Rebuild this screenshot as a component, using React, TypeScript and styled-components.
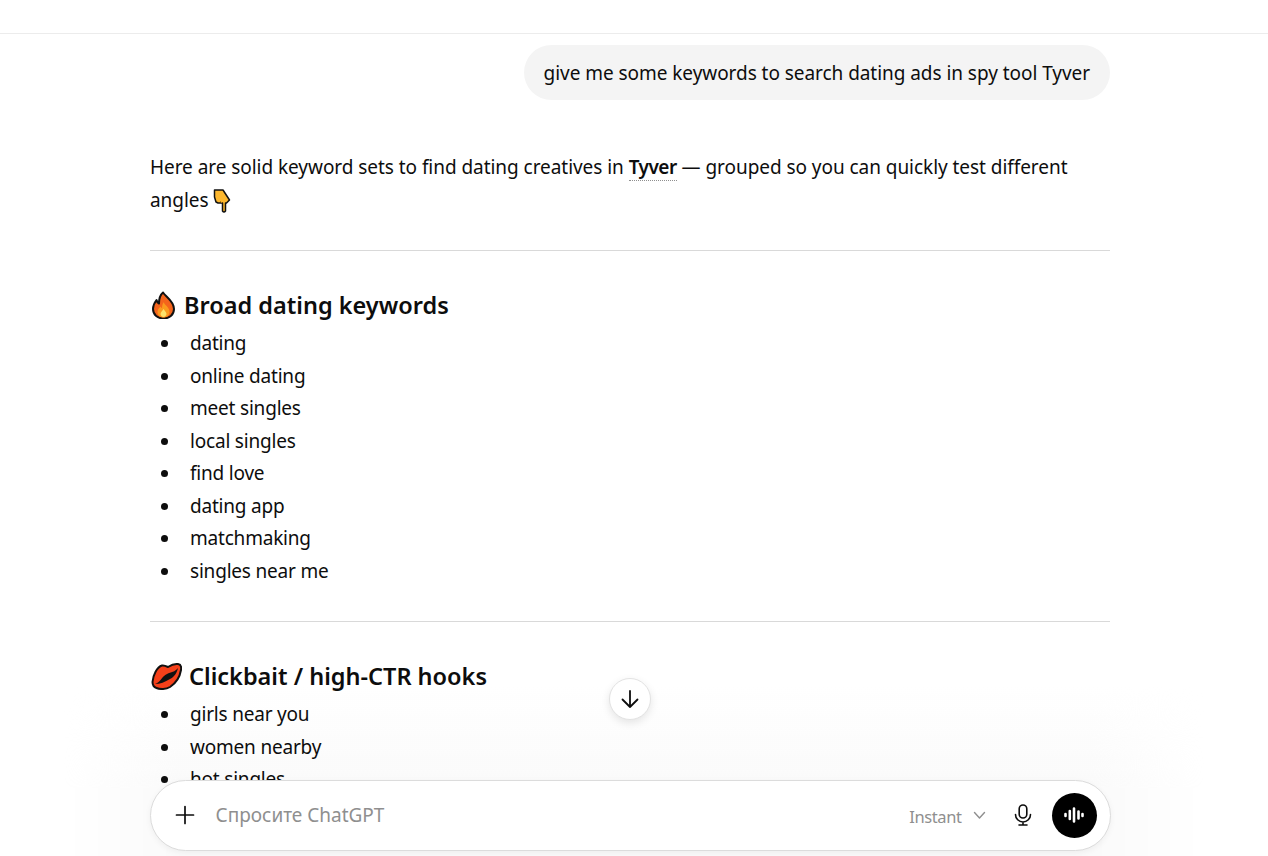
import React from "react";
import styled, { createGlobalStyle } from "styled-components";

const Global = createGlobalStyle`
  html, body { margin: 0; padding: 0; background: #fff; height: 100%; overflow: hidden; }
  #root { height: 100%; }
  * { box-sizing: border-box; }
`;

const Page = styled.div`
  position: relative;
  height: 856px;
  overflow: hidden;
  font-family: "Noto Sans", "Open Sans", sans-serif;
  color: #0d0d0d;
  background: #fff;
`;
const TopBar = styled.header`
  height: 34px;
  border-bottom: 1px solid #ececec;
`;
const Thread = styled.main`
  position: relative;
  width: 960px;
  margin: 0 0 0 150px;
  font-size: 19px;
  letter-spacing: -0.05px;
`;
const UserRow = styled.div`
  display: flex;
  justify-content: flex-end;
  padding-top: 11px;
`;
const Bubble = styled.div`
  height: 55px;
  padding: 0 20px;
  display: flex;
  align-items: center;
  background: #f4f4f4;
  border-radius: 28px;
`;
const Para = styled.p`
  margin: 51px 0 0;
  line-height: 33px;
`;
const Term = styled.strong`
  font-weight: 600;
  letter-spacing: -0.5px;
  border-bottom: 1px dotted #8f8f8f;
`;
const Rule = styled.hr<{ $top: number }>`
  margin: ${(p) => p.$top}px 0 0;
  border: 0;
  border-top: 1px solid #d9d9d9;
`;
const Heading = styled.h3`
  margin: 36px 0 0;
  height: 35px;
  display: flex;
  align-items: center;
  gap: 7px;
  font-size: 23.5px;
  font-weight: 600;
  letter-spacing: 0;
`;
const List = styled.ul`
  margin: 5px 0 0;
  padding: 0 0 0 40px;
  list-style: none;
  letter-spacing: -0.2px;
`;
const Item = styled.li`
  position: relative;
  height: 32.5px;
  line-height: 32.5px;
  &::before {
    content: "";
    position: absolute;
    left: -29px;
    top: 13px;
    width: 7px;
    height: 7px;
    border-radius: 50%;
    background: #0d0d0d;
  }
`;
const Emoji = styled.svg`
  flex: none;
  vertical-align: -6px;
`;
const Fade = styled.div`
  position: absolute;
  left: 0;
  right: 0;
  bottom: 0;
  height: 170px;
  background: linear-gradient(to bottom, rgba(250,250,250,0), #fafafa 60%, #fafafa 100%);
  mask-image: linear-gradient(to right, transparent 5%, #000 14%, #000 86%, transparent 95%);
`;
const Composer = styled.div`
  position: absolute;
  left: 149.5px;
  top: 779.5px;
  width: 961px;
  height: 71px;
  display: flex;
  align-items: center;
  background: #fff;
  border-radius: 36px;
  border: 1px solid #dcdcdc;
  box-shadow: 0 2px 6px rgba(0,0,0,0.05);
  padding: 0 13px 0 23px;
`;
const PlusIcon = styled.svg`
  flex: none;
`;
const Placeholder = styled.div`
  flex: 1;
  margin-left: 20px;
  font-size: 19px;
  color: #8f8f8f;
`;
const ModelPicker = styled.div`
  display: flex;
  align-items: center;
  gap: 11px;
  color: #8f8f8f;
  font-size: 16.5px;
  letter-spacing: -0.4px;
  margin-right: 28px;
`;
const ModelLabel = styled.span`
  margin-top: 2px;
`;
const VoiceButton = styled.div`
  margin-left: 20px;
  width: 45px;
  height: 45px;
  border-radius: 50%;
  background: #000;
  display: flex;
  align-items: center;
  justify-content: center;
`;
const ScrollButton = styled.div`
  position: absolute;
  left: 609px;
  top: 678px;
  width: 42px;
  height: 42px;
  border-radius: 50%;
  background: #fff;
  border: 1px solid #e3e3e3;
  box-shadow: 0 3px 8px rgba(0,0,0,0.1);
  display: flex;
  align-items: center;
  justify-content: center;
`;

const PointDown = () => (
  <Emoji width="18" height="24" viewBox="0 0 18 24">
    <path d="M1.500 1H10l6.500 10-3 3h-1v8q-1.500 2-3 0v-8H5L3 13 1.500 8z" fill="#fcb72e" stroke="#111" strokeWidth="1.500" strokeLinejoin="round" />
    <path d="M9 14l-2-2" fill="none" stroke="#b97f17" strokeWidth="1" />
  </Emoji>
);
const Fire = () => (
  <Emoji width="27" height="28" viewBox="0 0 27 28">
    <path d="M13 1.500C16 6 24 10 24 18c0 6-5 9.500-10.500 9.500S3 24 3 18c0-4 2-7 3.500-9 .5 2 1.500 3 2.500 3.500C9 8 10 4 13 1.500z" fill="#f4641c" stroke="#111" strokeWidth="2" strokeLinejoin="round" />
    <path d="M13.500 11c1 3 6 5 6 10 0 3-2.500 5.500-6 5.500s-6-2.500-6-5.500c0-3 2-4 3-5.500.5 1 1 1.500 1.500 1.500 0-2 .5-4 1.500-5.500z" fill="#fb9a1e" />
    <path d="M13.500 18c1 2 3 3 3 5 0 1.500-1.500 3-3 3s-3-1.500-3-3c0-2 2-3 3-5z" fill="#fde36a" />
  </Emoji>
);
const Lips = () => (
  <Emoji width="32" height="28" viewBox="0 0 32 28">
    <path d="M2.500 20C3 13 7 5 12 3.500c2-.5 4 .5 6 1.500 3-2 7-3.500 10-3 3 .5 3.500 3 3 6-1 6-5 13-11 17-4 2.500-10 2.500-13.500 1C3.500 25 2.500 23 2.500 20z" fill="#f5401a" stroke="#111" strokeWidth="2" strokeLinejoin="round" />
    <path d="M5 22c5-1 7-8 12-10 4-2 8-2 11-6-1 5-4 9-8 11-5 3-10 5-15 5z" fill="#111" />
  </Emoji>
);

const dating = ["dating", "online dating", "meet singles", "local singles", "find love", "dating app", "matchmaking", "singles near me"];
const hooks = ["girls near you", "women nearby", "hot singles"];

export default function App() {
  return (
    <Page>
      <Global />
      <TopBar />
      <Fade />
      <Thread>
        <UserRow>
          <Bubble>give me some keywords to search dating ads in spy tool Tyver</Bubble>
        </UserRow>
        <Para>
          Here are solid keyword sets to find dating creatives in <Term>Tyver</Term> — grouped so you can quickly test different angles <PointDown />
        </Para>
        <Rule $top={33} />
        <Heading><Fire />Broad dating keywords</Heading>
        <List>{dating.map((d) => <Item key={d}>{d}</Item>)}</List>
        <Rule $top={34} />
        <Heading><Lips />Clickbait / high-CTR hooks</Heading>
        <List>{hooks.map((d) => <Item key={d}>{d}</Item>)}</List>
      </Thread>
      <ScrollButton>
        <svg width="22" height="22" viewBox="0 0 22 22" fill="none" stroke="#0d0d0d" strokeWidth="1.800" strokeLinecap="round" strokeLinejoin="round">
          <path d="M11 3v16M3.500 11.500 11 19l7.500-7.500" />
        </svg>
      </ScrollButton>
      <Composer>
        <PlusIcon width="22" height="22" viewBox="0 0 22 22" fill="none" stroke="#0d0d0d" strokeWidth="1.700" strokeLinecap="round">
          <path d="M11 2.500v17M2.500 11h17" />
        </PlusIcon>
        <Placeholder>Спросите ChatGPT</Placeholder>
        <ModelPicker>
          <ModelLabel>Instant</ModelLabel>
          <svg width="13" height="9" viewBox="0 0 13 9" fill="none" stroke="#8f8f8f" strokeWidth="1.400" strokeLinecap="round" strokeLinejoin="round">
            <path d="M1.500 1.500 6.500 7l5-5.500" />
          </svg>
        </ModelPicker>
        <svg width="18" height="22" viewBox="0 0 18 22" fill="none" stroke="#0d0d0d" strokeWidth="1.600" strokeLinecap="round">
          <rect x="5.200" y="1" width="7.600" height="13" rx="3.800" />
          <path d="M1.500 10.500a7.500 7.500 0 0 0 15 0M9 18v3M5 21h8" />
        </svg>
        <VoiceButton>
          <svg width="22" height="16" viewBox="0 0 22 16" fill="none" stroke="#fff" strokeWidth="2.600" strokeLinecap="round">
            <path d="M2.500 7v2M6.800 4v8M11 1.500v13M15.500 4.500v7M19.500 7v2" />
          </svg>
        </VoiceButton>
      </Composer>
    </Page>
  );
}
